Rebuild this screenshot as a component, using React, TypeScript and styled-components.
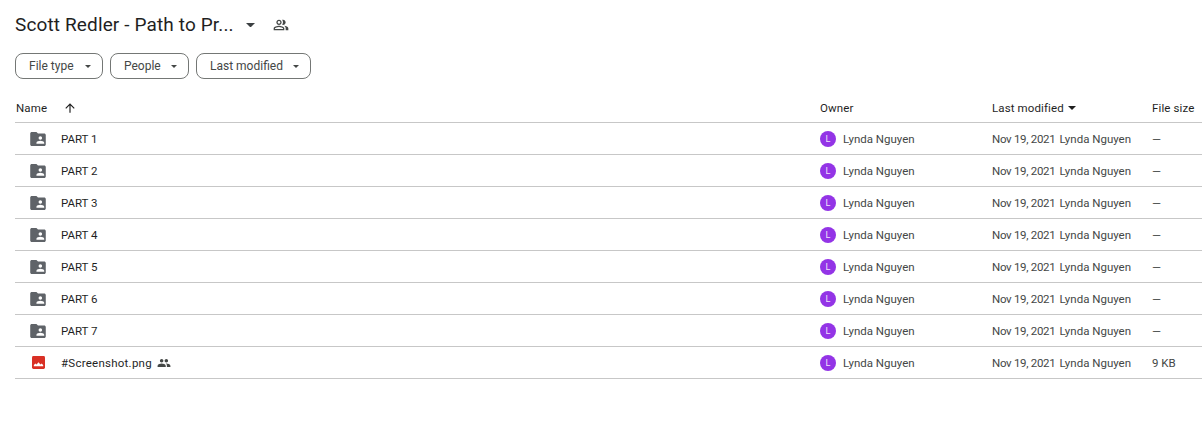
import React from 'react';
import styled, { createGlobalStyle } from 'styled-components';

const FONT = `Roboto, "Noto Sans", Arial, sans-serif`;

const GlobalStyle = createGlobalStyle`
	html, body {
		margin: 0;
		padding: 0;
		background: #fff;
		font-family: ${FONT};
		overflow: hidden;
	}
`;

const Root = styled.div`
	width: 1202px;
	height: 421px;
	padding: 11px 0 0 15px;
	box-sizing: border-box;
	overflow: hidden;
`;

const TitleBar = styled.div`
	display: flex;
	align-items: center;
	height: 28px;
`;

const Title = styled.div`
	font-size: 19px;
	line-height: 28px;
	color: #1f1f1f;
	width: 222px;
	letter-spacing: 0.13px;
	white-space: nowrap;
`;

const TitleCaret = styled.svg`
	width: 9px;
	height: 4.5px;
	fill: #3c4043;
	margin-left: 9px;
`;

const SharedIcon = styled.svg`
	width: 16px;
	height: 16px;
	margin-left: 18px;
	fill: #444746;
`;

const Filters = styled.div`
	display: flex;
	gap: 7px;
	margin-top: 14px;
`;

const FilterChip = styled.div<{ $width: number }>`
	display: flex;
	align-items: center;
	justify-content: space-between;
	box-sizing: border-box;
	width: ${props => props.$width}px;
	height: 26px;
	padding: 0 11px 0 13px;
	border: 1px solid #747775;
	border-radius: 8px;
	font-size: 12px;
	color: #444746;
`;

const ChipCaret = styled.svg`
	width: 6px;
	height: 3px;
	fill: #444746;
	margin-top: 1px;
`;

const Table = styled.div`
	margin-top: 15px;
	width: 1187px;
`;

const gridColumns = '805px 172px 160px 50px';

const HeaderRow = styled.div`
	display: grid;
	grid-template-columns: ${gridColumns};
	align-items: center;
	height: 28px;
	font-size: 11.5px;
	letter-spacing: 0.12px;
	color: #1f1f1f;
	border-bottom: 1px solid #c7c7c7;
	box-sizing: content-box;
`;

const HeaderCell = styled.div`
	display: flex;
	align-items: center;
	white-space: nowrap;
`;

const NameHeader = styled(HeaderCell)`
	padding-left: 1px;
`;

const SortArrow = styled.svg`
	width: 14px;
	height: 14px;
	margin-left: 16px;
	fill: #1f1f1f;
`;

const SortCaret = styled.svg`
	width: 8px;
	height: 4px;
	margin-left: 4px;
	fill: #1f1f1f;
`;

const Row = styled.div`
	display: grid;
	grid-template-columns: ${gridColumns};
	align-items: center;
	height: 31px;
	border-bottom: 1px solid #c7c7c7;
	font-size: 11.5px;
	color: #444746;
`;

const NameCell = styled.div`
	display: flex;
	align-items: center;
	padding-left: 15px;
	color: #1f1f1f;
	white-space: nowrap;
`;

const FileName = styled.span<{ $spacing: number }>`
	margin-left: 15px;
	letter-spacing: ${props => props.$spacing}px;
`;

const FolderIcon = styled.svg`
	width: 16px;
	height: 14px;
	fill: #5f6368;
`;

const ImageIcon = styled.svg`
	width: 13px;
	height: 13px;
	margin: 0 1px 0 2px;
`;

const RowShared = styled.svg`
	width: 14px;
	height: 14px;
	margin-left: 5px;
	fill: #444746;
`;

const OwnerCell = styled.div`
	display: flex;
	align-items: center;
	gap: 7px;
	white-space: nowrap;
`;

const Avatar = styled.div`
	width: 16px;
	height: 16px;
	border-radius: 50%;
	background: #9334e6;
	color: #f0e4fb;
	font-size: 9px;
	line-height: 16px;
	text-align: center;
`;

const ModifiedCell = styled.div`
	display: flex;
	gap: 4px;
	white-space: nowrap;
`;

const ModifiedDate = styled.span`
	letter-spacing: -0.3px;
`;

const SizeCell = styled.div`
	white-space: nowrap;
`;

const PEOPLE_PATH = 'M16 11c1.66 0 2.99-1.34 2.99-3S17.66 5 16 5s-3 1.34-3 3 1.34 3 3 3zm-8 0c1.66 0 2.99-1.34 2.99-3S9.66 5 8 5 5 6.34 5 8s1.34 3 3 3zm0 2c-2.33 0-7 1.17-7 3.5V19h14v-2.5C15 14.17 10.33 13 8 13zm8 0c-.29 0-.62.02-.97.05 1.16.84 1.97 1.97 1.97 3.45V19h6v-2.5c0-2.33-4.67-3.5-7-3.5z';
const PEOPLE_OUTLINE_PATH = 'M16.67 13.13C18.04 14.06 19 15.32 19 17v3h4v-3c0-2.18-3.57-3.47-6.33-3.87zM15 12c2.21 0 4-1.79 4-4s-1.79-4-4-4c-.47 0-.91.1-1.33.24C14.5 5.27 15 6.58 15 8s-.5 2.73-1.33 3.76c.42.14.86.24 1.33.24zM9 12c2.21 0 4-1.79 4-4s-1.79-4-4-4-4 1.79-4 4 1.79 4 4 4zm0-6c1.1 0 2 .9 2 2s-.9 2-2 2-2-.9-2-2 .9-2 2-2zM9 13c-2.67 0-8 1.34-8 4v3h16v-3c0-2.66-5.33-4-8-4zm6 5H3v-.99C3.2 16.29 6.3 15 9 15s5.8 1.29 6 2V18z';

const Folder = () => (
	<FolderIcon viewBox="0 0 20 18">
		<path fillRule="evenodd" d="M2 0h6l2 2h8c1.1 0 2 .9 2 2v12c0 1.1-.9 2-2 2H2c-1.1 0-2-.9-2-2V2C0 .9.9 0 2 0zm11 5.5a2.3 2.3 0 1 0 0 4.6 2.3 2.3 0 0 0 0-4.6zM8 15h10v-1.3c0-1.6-3.3-2.5-5-2.5s-5 .9-5 2.5V15z" />
	</FolderIcon>
);

const PictureFile = () => (
	<ImageIcon viewBox="0 0 14 14">
		<rect width="14" height="14" rx="1.5" fill="#d93025" />
		<path d="M2 11V9.6l1.6-1.4 1.3 1L7 6.6l2.1 2.6 1.2-1 1.7 1.4V11z" fill="#fff" />
	</ImageIcon>
);

const rows = ['PART 1', 'PART 2', 'PART 3', 'PART 4', 'PART 5', 'PART 6', 'PART 7'];

type FileRowProps = React.PropsWithChildren<{
	size: string;
}>;

const FileRow = ({ size, children }: FileRowProps) => (
	<Row>
		<NameCell>{children}</NameCell>
		<OwnerCell>
			<Avatar>L</Avatar>
			<span>Lynda Nguyen</span>
		</OwnerCell>
		<ModifiedCell>
			<ModifiedDate>Nov 19, 2021</ModifiedDate>
			<span>Lynda Nguyen</span>
		</ModifiedCell>
		<SizeCell>{size}</SizeCell>
	</Row>
);

const App = () => (
	<Root>
		<GlobalStyle />
		<TitleBar>
			<Title>Scott Redler - Path to Pr...</Title>
			<TitleCaret viewBox="0 0 10 5"><path d="M0 0l5 5 5-5z" /></TitleCaret>
			<SharedIcon viewBox="0 0 24 24"><path d={PEOPLE_OUTLINE_PATH} /></SharedIcon>
		</TitleBar>
		<Filters>
			<FilterChip $width={88}>File type<ChipCaret viewBox="0 0 6 3"><path d="M0 0l3 3 3-3z" /></ChipCaret></FilterChip>
			<FilterChip $width={79}>People<ChipCaret viewBox="0 0 6 3"><path d="M0 0l3 3 3-3z" /></ChipCaret></FilterChip>
			<FilterChip $width={115}>Last modified<ChipCaret viewBox="0 0 6 3"><path d="M0 0l3 3 3-3z" /></ChipCaret></FilterChip>
		</Filters>
		<Table>
			<HeaderRow>
				<NameHeader>
					Name
					<SortArrow viewBox="0 0 24 24"><path d="M4 12l1.41 1.41L11 7.83V20h2V7.83l5.58 5.59L20 12l-8-8z" /></SortArrow>
				</NameHeader>
				<HeaderCell>Owner</HeaderCell>
				<HeaderCell>
					Last modified
					<SortCaret viewBox="0 0 8 4"><path d="M0 0l4 4 4-4z" /></SortCaret>
				</HeaderCell>
				<HeaderCell>File size</HeaderCell>
			</HeaderRow>
			{rows.map(name => (
				<FileRow key={name} size="—">
					<Folder />
					<FileName $spacing={0}>{name}</FileName>
				</FileRow>
			))}
			<FileRow size="9 KB">
				<PictureFile />
				<FileName $spacing={0.25}>#Screenshot.png</FileName>
				<RowShared viewBox="0 0 24 24"><path d={PEOPLE_PATH} /></RowShared>
			</FileRow>
		</Table>
	</Root>
);

export default App;
